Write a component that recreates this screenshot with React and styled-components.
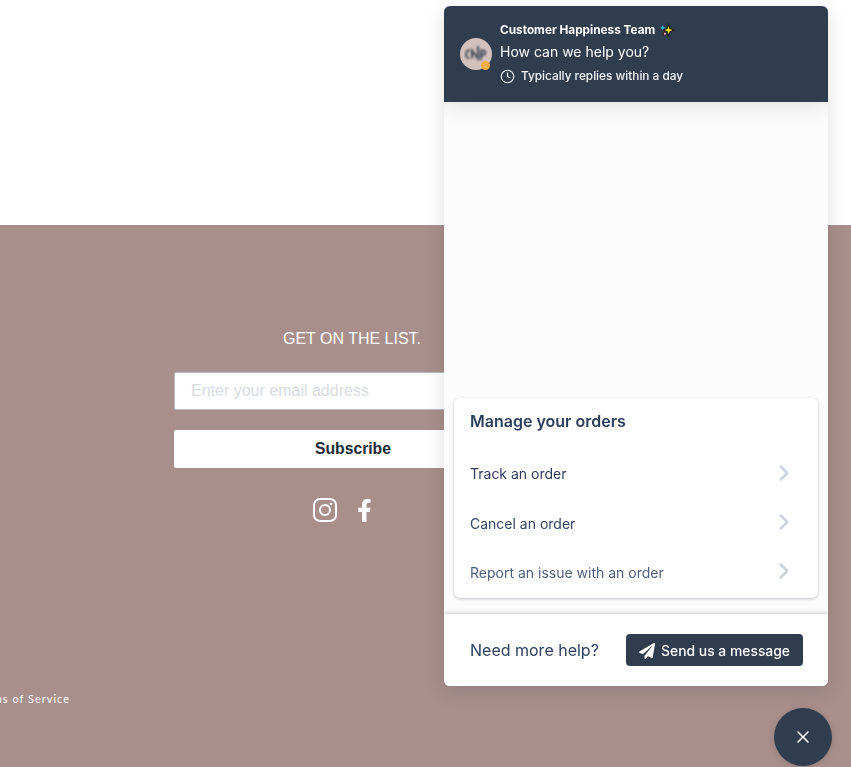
import React from 'react';
import styled, { createGlobalStyle } from 'styled-components';
import { FaFacebookF, FaPaperPlane } from 'react-icons/fa';
import { ChevronRight, Clock, X } from 'lucide-react';

const GlobalStyle = createGlobalStyle`
  html, body {
    margin: 0;
    padding: 0;
    height: 100%;
    background: #fff;
    overflow: hidden;
  }
  #root {
    height: 100%;
  }
`;

const Page = styled.div`
  display: flex;
  flex-direction: column;
  height: 767px;
`;

const TopSpace = styled.div`
  height: 225px;
  background: #fff;
`;

const Footer = styled.footer`
  flex: 1;
  display: flex;
  flex-direction: column;
  background: #a88f8c;
  padding-top: 104px;
`;

const Signup = styled.div`
  width: 356px;
  margin-left: 174px;
  display: flex;
  flex-direction: column;
  align-items: center;
`;

const SignupTitle = styled.div`
  font-family: 'Liberation Sans', Arial, sans-serif;
  font-size: 16px;
  line-height: 20px;
  color: #fff;
  margin-bottom: 23px;
`;

const EmailInput = styled.input`
  box-sizing: border-box;
  width: 100%;
  height: 38px;
  border: 1px solid #b5bcc6;
  border-radius: 2px;
  background: #fff;
  padding: 0 16px;
  font-family: 'Liberation Sans', Arial, sans-serif;
  font-size: 16px;
  outline: none;
  &::placeholder {
    color: #d9dce1;
    opacity: 1;
  }
`;

const SubscribeButton = styled.button`
  width: 100%;
  height: 38px;
  margin-top: 20px;
  padding: 0 0 0 2px;
  border: 0;
  border-radius: 2px;
  background: #fff;
  color: #212b36;
  font-family: 'Liberation Sans', Arial, sans-serif;
  font-weight: 700;
  font-size: 15.7px;
`;

const Socials = styled.div`
  display: flex;
  align-items: center;
  gap: 16px;
  margin-top: 30px;
  margin-right: 16px;
  color: #fff;
`;

const Legal = styled.div`
  width: 70px;
  margin-top: 170px;
  display: flex;
  justify-content: flex-end;
  overflow: hidden;
  font-family: Lato, sans-serif;
  font-size: 11px;
  line-height: 14px;
  letter-spacing: 1px;
  white-space: nowrap;
  color: #fff;
`;

const Widget = styled.aside`
  position: fixed;
  left: 444px;
  top: 6px;
  width: 384px;
  height: 680px;
  display: flex;
  flex-direction: column;
  border-radius: 6px;
  overflow: hidden;
  background: #fcfcfc;
  box-shadow: 0 5px 20px rgba(0, 0, 0, 0.13);
  font-family: Inter, sans-serif;
`;

const WidgetHeader = styled.header`
  position: relative;
  height: 96px;
  flex: none;
  display: flex;
  align-items: center;
  gap: 8px;
  padding: 0 16px;
  background: #2f3d4f;
  color: #fff;
  box-shadow: 0 6px 20px rgba(0, 0, 0, 0.1);
`;

const AvatarWrap = styled.div`
  position: relative;
  width: 32px;
  height: 32px;
`;

const StatusDot = styled.span`
  position: absolute;
  right: 2px;
  bottom: 0;
  width: 9px;
  height: 9px;
  border-radius: 50%;
  background: #f9ae42;
`;

const HeaderText = styled.div`
  display: flex;
  flex-direction: column;
  margin-bottom: 2px;
`;

const TeamName = styled.div`
  display: flex;
  align-items: center;
  gap: 5px;
  font-size: 11.8px;
  line-height: 16px;
  font-weight: 700;
`;

const Greeting = styled.div`
  margin-top: 5px;
  font-size: 14px;
  line-height: 18px;
`;

const ReplyTime = styled.div`
  display: flex;
  align-items: center;
  gap: 6px;
  margin-top: 7px;
  font-size: 11.8px;
  line-height: 16px;
  font-weight: 500;
  color: #f4f5f7;
`;

const WidgetBody = styled.div`
  flex: 1;
  display: flex;
  flex-direction: column;
  justify-content: flex-end;
  padding: 0 10px 16px;
`;

const Card = styled.section`
  box-sizing: border-box;
  height: 200px;
  padding: 12px 16px 0;
  background: #fff;
  border-radius: 6px;
  box-shadow: 0 1px 3px rgba(47, 61, 79, 0.3);
`;

const CardTitle = styled.h2`
  margin: 0 0 17px;
  font-size: 16px;
  line-height: 22px;
  font-weight: 600;
  color: #2c3e5d;
`;

const OrderRow = styled.div`
  display: flex;
  align-items: center;
  justify-content: space-between;
  height: 49.4px;
  padding-right: 5px;
  font-size: 14px;
  color: ${(p) => p.$color};
`;

const Chevron = styled(ChevronRight)`
  margin-top: -2px;
  color: #cfd4db;
`;

const WidgetFooter = styled.div`
  flex: none;
  height: 72px;
  display: flex;
  align-items: center;
  justify-content: space-between;
  padding: 0 25px 0 26px;
  background: #fff;
  box-shadow: 0 -1px 4px rgba(0, 0, 0, 0.2);
`;

const HelpText = styled.span`
  font-size: 16px;
  color: #2c3e5d;
`;

const SendButton = styled.button`
  box-sizing: border-box;
  width: 177px;
  height: 32px;
  display: flex;
  align-items: center;
  gap: 6px;
  padding: 1px 0 0 13px;
  border: 0;
  border-radius: 4px;
  background: #2f3d4f;
  color: #fff;
  font-family: Inter, sans-serif;
  font-size: 13.9px;
  font-weight: 500;
`;

const Launcher = styled.button`
  position: fixed;
  left: 774px;
  top: 708px;
  width: 58px;
  height: 58px;
  display: flex;
  align-items: center;
  justify-content: center;
  padding: 0;
  border: 0;
  border-radius: 50%;
  background: #2f3d4f;
  color: #fff;
  box-shadow: 0 1px 6px rgba(0, 0, 0, 0.15);
`;

const orders = [
  { label: 'Track an order', color: '#2f3a5c' },
  { label: 'Cancel an order', color: '#34455f' },
  { label: 'Report an issue with an order', color: '#4f5f7a' },
];

const InstagramIcon = () => (
  <svg width="24" height="24" viewBox="0 0 24 24" fill="none" stroke="#fff" strokeWidth="2">
    <rect x="1" y="1" width="22" height="22" rx="6" />
    <circle cx="12" cy="12" r="5" />
    <circle cx="18" cy="6" r="1.3" fill="#fff" stroke="none" />
  </svg>
);

const Sparkles = () => (
  <svg width="15" height="15" viewBox="0 0 14 14">
    <path d="M8 0 L9.6 4.8 L14 6.6 L9.6 8.4 L8 13.4 L6.4 8.4 L2 6.6 L6.4 4.8 Z" fill="#0c0c0c" />
    <path d="M8 2.6 L8.9 5.6 L12 6.6 L8.9 7.6 L8 10.8 L7.1 7.6 L4 6.6 L7.1 5.6 Z" fill="#ffee00" />
    <path d="M2.5 2 L3.4 3.7 L5.2 4.5 L3.4 5.3 L2.5 6.8 L1.6 5.3 L0 4.5 L1.6 3.7 Z" fill="#35b6d6" />
    <circle cx="4.6" cy="10" r="1.6" fill="#e6a0b8" stroke="#111" strokeWidth="0.8" />
  </svg>
);

const AvatarLogo = () => (
  <svg width="32" height="32" viewBox="0 0 32 32">
    <defs>
      <filter id="soft">
        <feGaussianBlur stdDeviation="0.85" />
      </filter>
    </defs>
    <circle cx="16" cy="16" r="16" fill="#d3c1be" />
    <g filter="url(#soft)" fill="none" stroke="#36424f" strokeWidth="1.8">
      <path d="M9.5 12.5 C5 12 5 20 9 20" />
      <path d="M12 20.5 L12 12.5 L18 20.5 L18 8" />
      <path d="M21 22 L21 12.5 C26.5 11.5 27 17.5 21 17.5" />
    </g>
  </svg>
);

const App = () => (
  <>
    <GlobalStyle />
    <Page>
      <TopSpace />
      <Footer>
        <Signup>
          <SignupTitle>GET ON THE LIST.</SignupTitle>
          <EmailInput placeholder="Enter your email address" />
          <SubscribeButton>Subscribe</SubscribeButton>
          <Socials>
            <InstagramIcon />
            <FaFacebookF size={23} />
          </Socials>
        </Signup>
        <Legal>
          <span>Terms of Service</span>
        </Legal>
      </Footer>
    </Page>

    <Widget>
      <WidgetHeader>
        <AvatarWrap>
          <AvatarLogo />
          <StatusDot />
        </AvatarWrap>
        <HeaderText>
          <TeamName>
            Customer Happiness Team <Sparkles />
          </TeamName>
          <Greeting>How can we help you?</Greeting>
          <ReplyTime>
            <Clock size={15} strokeWidth={1.9} />
            Typically replies within a day
          </ReplyTime>
        </HeaderText>
      </WidgetHeader>
      <WidgetBody>
        <Card>
          <CardTitle>Manage your orders</CardTitle>
          {orders.map((order) => (
            <OrderRow key={order.label} $color={order.color}>
              {order.label}
              <Chevron size={26} strokeWidth={2.3} />
            </OrderRow>
          ))}
        </Card>
      </WidgetBody>
      <WidgetFooter>
        <HelpText>Need more help?</HelpText>
        <SendButton>
          <FaPaperPlane size={16} />
          Send us a message
        </SendButton>
      </WidgetFooter>
    </Widget>

    <Launcher>
      <X size={20} strokeWidth={1.9} />
    </Launcher>
  </>
);

export default App;
